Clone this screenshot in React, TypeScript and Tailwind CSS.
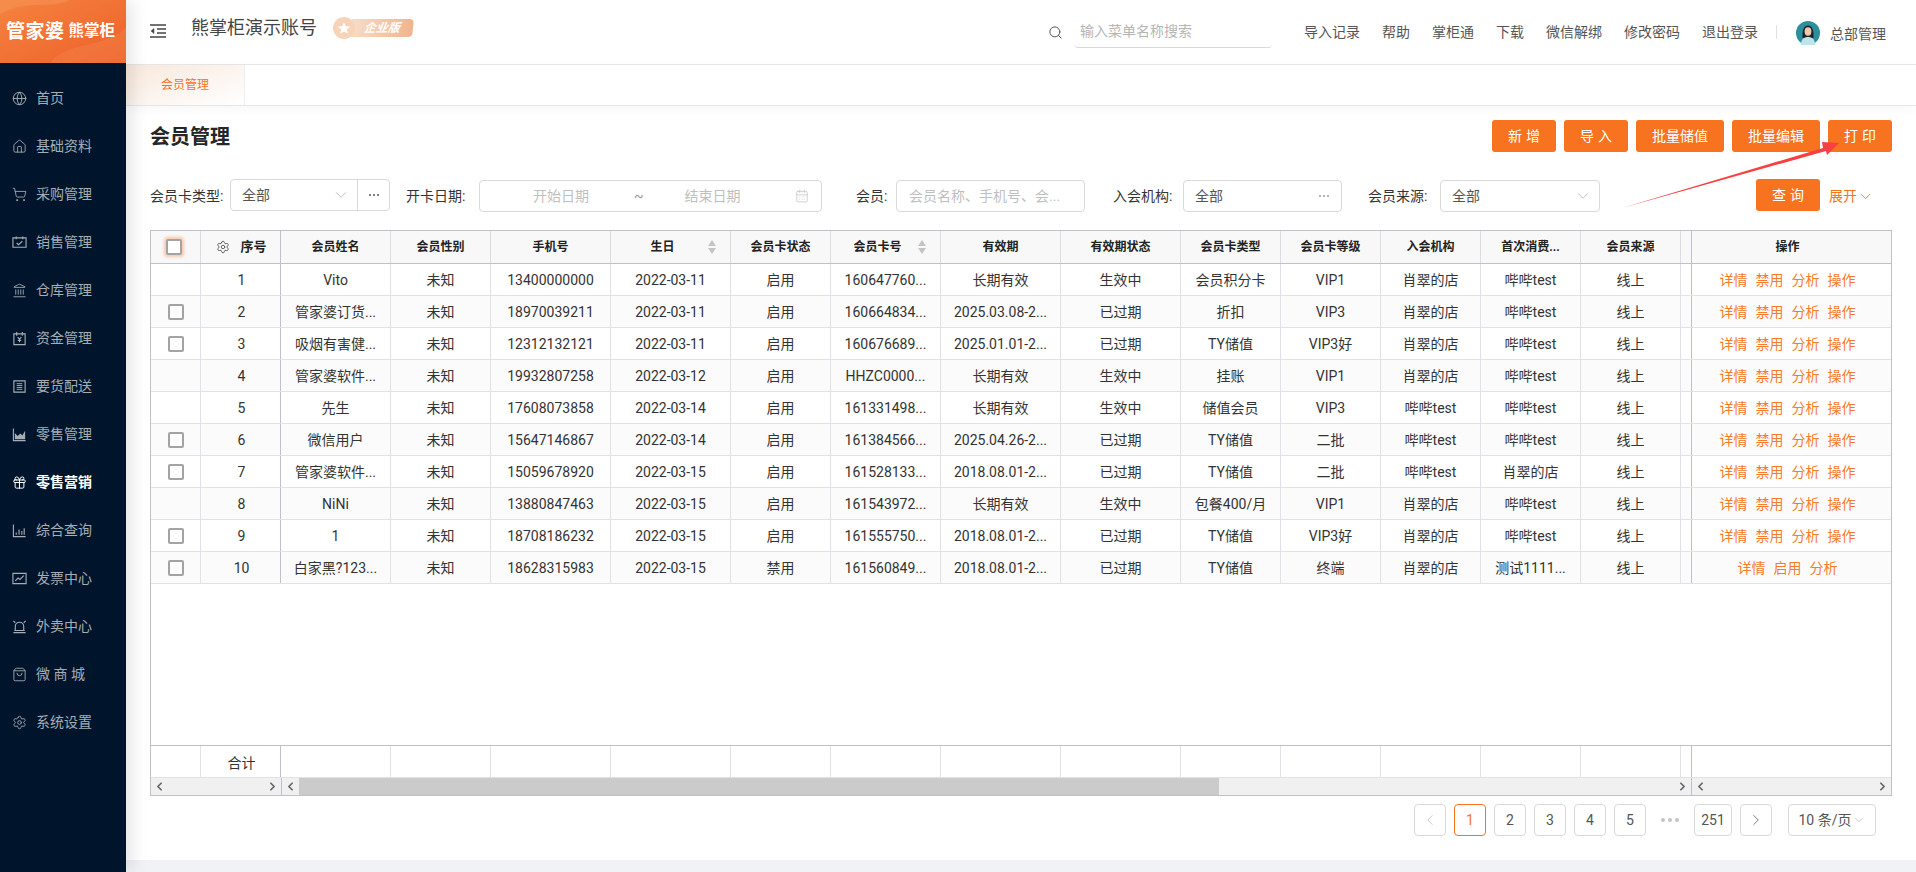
import {
  CalendarDays,
  ChevronDown,
  ChevronLeft,
  ChevronRight,
  Gift,
  Globe,
  House,
  Landmark,
  Search,
  Settings,
  ShoppingBag,
  ShoppingCart,
} from "lucide-react";
import type { ReactNode } from "react";

const font = "font-['Roboto','Noto_Sans_CJK_SC',sans-serif]";

function SalesIcon() {
  return (
    <svg width="15" height="15" viewBox="0 0 16 16" fill="none" stroke="currentColor" strokeWidth="1.2">
      <path d="M1 3h14v10H1zM4.5 1.5v3M11.5 1.5v3M5 8.5l2 1.8 4-3.6" />
    </svg>
  );
}

function FundIcon() {
  return (
    <svg width="15" height="15" viewBox="0 0 16 16" fill="none" stroke="currentColor" strokeWidth="1.2">
      <path d="M2 3h12v11.5H2zM5 1v4M11 1v4M6 6.5l2 2.2 2-2.2M8 8.7V12M6.2 10h3.6" />
    </svg>
  );
}

function DeliveryIcon() {
  return (
    <svg width="15" height="15" viewBox="0 0 16 16" fill="none" stroke="currentColor" strokeWidth="1.2">
      <path d="M2 2h12v12H2z" />
      <path d="M5 5h6M5 7h6M5 9h6M5 11h6" strokeWidth="1" />
    </svg>
  );
}

function AreaIcon() {
  return (
    <svg width="15" height="15" viewBox="0 0 16 16" fill="none">
      <path d="M1.5 1.500v13h13" stroke="currentColor" strokeWidth="1.2" />
      <path d="M3 13V6.500l3 3 3-2.500 2 2 3-5V13z" fill="currentColor" />
    </svg>
  );
}

function QueryIcon() {
  return (
    <svg width="15" height="15" viewBox="0 0 16 16" fill="none" stroke="currentColor" strokeWidth="1.2">
      <path d="M1.500 1.500v13h13M4.500 12.500V10M7.500 12.500V7M10.500 12.500V8.500M13 12.500V5.500" />
    </svg>
  );
}

function InvoiceIcon() {
  return (
    <svg width="15" height="15" viewBox="0 0 16 16" fill="none" stroke="currentColor" strokeWidth="1.2">
      <path d="M1 2.500h14v11H1zM3.500 10.500l3-3 2 1.500 4-4" />
    </svg>
  );
}

function AlarmIcon() {
  return (
    <svg width="15" height="15" viewBox="0 0 16 16" fill="none" stroke="currentColor" strokeWidth="1.2">
      <path d="M3.500 12V8a4.500 4.500 0 0 1 9 0v4M1.500 14.500h13M2.500 12.200h11M1.500 2l2 2M14.500 2l-2 2" />
    </svg>
  );
}

const menu: { label: string; icon: ReactNode; active?: boolean }[] = [
  { label: "首页", icon: <Globe size={15} strokeWidth={1.5} /> },
  { label: "基础资料", icon: <House size={15} strokeWidth={1.4} /> },
  { label: "采购管理", icon: <ShoppingCart size={15} strokeWidth={1.4} /> },
  { label: "销售管理", icon: <SalesIcon /> },
  { label: "仓库管理", icon: <Landmark size={15} strokeWidth={1.4} /> },
  { label: "资金管理", icon: <FundIcon /> },
  { label: "要货配送", icon: <DeliveryIcon /> },
  { label: "零售管理", icon: <AreaIcon /> },
  { label: "零售营销", icon: <Gift size={15} strokeWidth={1.6} />, active: true },
  { label: "综合查询", icon: <QueryIcon /> },
  { label: "发票中心", icon: <InvoiceIcon /> },
  { label: "外卖中心", icon: <AlarmIcon /> },
  { label: "微 商 城", icon: <ShoppingBag size={15} strokeWidth={1.4} /> },
  { label: "系统设置", icon: <Settings size={15} strokeWidth={1.4} /> },
];

const topLinks = [
  { label: "导入记录", cls: "ml-0" },
  { label: "帮助", cls: "ml-[22px]" },
  { label: "掌柜通", cls: "ml-[22px]" },
  { label: "下载", cls: "ml-[22px]" },
  { label: "微信解绑", cls: "ml-[22px]" },
  { label: "修改密码", cls: "ml-[22px]" },
  { label: "退出登录", cls: "ml-[22px]" },
];

const columns = [
  { label: "", cls: "w-[50px]" },
  { label: "序号", cls: "w-[80px] pl-[2px] border-r-[#bfc0cc]" },
  { label: "会员姓名", cls: "w-[110px]" },
  { label: "会员性别", cls: "w-[100px]" },
  { label: "手机号", cls: "w-[120px]" },
  { label: "生日", cls: "w-[120px]", sort: true },
  { label: "会员卡状态", cls: "w-[100px]" },
  { label: "会员卡号", cls: "w-[110px]", sort: true },
  { label: "有效期", cls: "w-[120px]" },
  { label: "有效期状态", cls: "w-[120px]" },
  { label: "会员卡类型", cls: "w-[100px]" },
  { label: "会员卡等级", cls: "w-[100px]" },
  { label: "入会机构", cls: "w-[100px]" },
  { label: "首次消费...", cls: "w-[100px]" },
  { label: "会员来源", cls: "w-[100px]" },
  { label: "", cls: "w-[11px] border-r-[#bfc0cc]" },
  { label: "操作", cls: "w-[199px] pr-[8px] border-r-0" },
];

const rows = [
  { check: false, cells: ["1", "Vito", "未知", "13400000000", "2022-03-11", "启用", "160647760...", "长期有效", "生效中", "会员积分卡", "VIP1", "肖翠的店", "哔哔test", "线上"] },
  { check: true, cells: ["2", "管家婆订货...", "未知", "18970039211", "2022-03-11", "启用", "160664834...", "2025.03.08-2...", "已过期", "折扣", "VIP3", "肖翠的店", "哔哔test", "线上"] },
  { check: true, cells: ["3", "吸烟有害健...", "未知", "12312132121", "2022-03-11", "启用", "160676689...", "2025.01.01-2...", "已过期", "TY储值", "VIP3好", "肖翠的店", "哔哔test", "线上"] },
  { check: false, cells: ["4", "管家婆软件...", "未知", "19932807258", "2022-03-12", "启用", "HHZC0000...", "长期有效", "生效中", "挂账", "VIP1", "肖翠的店", "哔哔test", "线上"] },
  { check: false, cells: ["5", "先生", "未知", "17608073858", "2022-03-14", "启用", "161331498...", "长期有效", "生效中", "储值会员", "VIP3", "哔哔test", "哔哔test", "线上"] },
  { check: true, cells: ["6", "微信用户", "未知", "15647146867", "2022-03-14", "启用", "161384566...", "2025.04.26-2...", "已过期", "TY储值", "二批", "哔哔test", "哔哔test", "线上"] },
  { check: true, cells: ["7", "管家婆软件...", "未知", "15059678920", "2022-03-15", "启用", "161528133...", "2018.08.01-2...", "已过期", "TY储值", "二批", "哔哔test", "肖翠的店", "线上"] },
  { check: false, cells: ["8", "NiNi", "未知", "13880847463", "2022-03-15", "启用", "161543972...", "长期有效", "生效中", "包餐400/月", "VIP1", "肖翠的店", "哔哔test", "线上"] },
  { check: true, cells: ["9", "1", "未知", "18708186232", "2022-03-15", "启用", "161555750...", "2018.08.01-2...", "已过期", "TY储值", "VIP3好", "肖翠的店", "哔哔test", "线上"] },
  { check: true, disabled: true, cells: ["10", "白家黑?123...", "未知", "18628315983", "2022-03-15", "禁用", "161560849...", "2018.08.01-2...", "已过期", "TY储值", "终端", "肖翠的店", "测试1111...", "线上"] },
];

function Checkbox({ glow }: { glow?: boolean }) {
  return (
    <span
      className={`block h-4 w-4 rounded-[2px] border-2 border-[#a3a3a3] bg-white ${glow ? "shadow-[0_0_3px_2px_rgba(248,114,32,0.35)]" : ""}`}
    />
  );
}

function SortIcon() {
  return (
    <span className="absolute right-[14px] top-1/2 flex -translate-y-1/2 flex-col gap-[2px]">
      <span className="h-0 w-0 border-x-[4px] border-b-[6px] border-x-transparent border-b-[#c4c4c4]" />
      <span className="h-0 w-0 border-x-[4px] border-t-[6px] border-x-transparent border-t-[#c4c4c4]" />
    </span>
  );
}

function OrangeButton({ children, cls }: { children: ReactNode; cls: string }) {
  return (
    <button className={`h-8 rounded-[3px] bg-[#f7731f] text-[14px] text-white ${cls}`}>
      {children}
    </button>
  );
}

function Label({ children, cls }: { children: ReactNode; cls: string }) {
  return <span className={`text-[14px] text-[#333] ${cls}`}>{children}</span>;
}

function ScrollArrow({ right }: { right?: boolean }) {
  const Icon = right ? ChevronRight : ChevronLeft;
  return (
    <span className="flex h-full w-[17px] shrink-0 items-center justify-center text-[#666]">
      <Icon size={13} strokeWidth={3.2} />
    </span>
  );
}

function PageButton({ children, active, cls }: { children: ReactNode; active?: boolean; cls?: string }) {
  return (
    <span
      className={`flex h-8 items-center justify-center rounded-[4px] border text-[14px] ${
        active ? "border-[#f7731f] text-[#f7731f]" : "border-[#d9d9d9] text-[#555]"
      } ${cls ?? "w-8"}`}
    >
      {children}
    </span>
  );
}

function Sidebar() {
  return (
    <aside className="relative z-20 flex w-[126px] shrink-0 flex-col bg-[#00152b] shadow-[6px_0_16px_rgba(0,0,0,0.1)]">
      <div className="relative flex h-[63px] items-center overflow-hidden bg-gradient-to-br from-[#f5833f] to-[#ee5f2a] pl-[6px]">
        <svg className="absolute inset-0" width="126" height="63" viewBox="0 0 126 63" fill="none">
          <path d="M0 14C30 -2 50 10 70 0H0z" fill="#f8a065" fillOpacity="0.35" />
          <path d="M50 63C70 40 100 50 126 28V63z" fill="#f8a065" fillOpacity="0.22" />
        </svg>
        <span className="relative text-[19px] font-bold leading-none tracking-[0.5px] text-white">管家婆</span>
        <span className="relative ml-[4px] text-[15.5px] font-bold leading-none text-white">熊掌柜</span>
      </div>
      <nav className="pt-[11px]">
        {menu.map((item) => (
          <div
            key={item.label}
            className={`flex h-12 items-center pl-[12px] text-[14px] ${
              item.active ? "font-bold text-white" : "text-[#a6adb4]"
            }`}
          >
            <span className="flex w-[15px] shrink-0 justify-center">{item.icon}</span>
            <span className="ml-[9px]">{item.label}</span>
          </div>
        ))}
      </nav>
    </aside>
  );
}

function TopBar() {
  return (
    <header className="flex h-[65px] items-center border-b border-[#e6e6e6] bg-white pl-6 pr-[30px]">
      <svg className="mb-[2px]" width="16" height="14" viewBox="0 0 16 14" fill="none" stroke="#444" strokeWidth="1.4">
        <path d="M0 1h16M7 5h9M7 9h9M0 13h16" />
        <path d="M4 4.500L1 7l3 2.500z" fill="#444" strokeWidth="0.5" />
      </svg>
      <span className="mb-[9px] ml-[25px] text-[18px] text-[#444]">熊掌柜演示账号</span>
      <span className="mb-[8px] ml-4 flex items-center">
        <span className="z-10 flex h-[22px] w-[22px] items-center justify-center rounded-full bg-[#f7d3ba]">
          <svg width="14" height="14" viewBox="0 0 24 24" fill="#fff">
            <path d="M12 2l3 7 7.500.6-5.700 4.900 1.800 7.500L12 18l-6.600 4 1.800-7.500L1.500 9.600 9 9z" />
          </svg>
        </span>
        <span className="-ml-1 flex h-[18px] w-[62px] -skew-x-6 items-center rounded-r-[4px] bg-gradient-to-r from-[#f8dcc8] to-[#f0b48c] pl-[13px] text-[12px] font-bold italic text-white">
          企业版
        </span>
      </span>
      <div className="ml-auto flex items-center">
        <Search size={15} className="text-[#555]" strokeWidth={1.6} />
        <span className="ml-[11px] flex h-8 w-[198px] items-center rounded-b-[4px] border-b border-[#d9d9d9] pl-[6px] text-[14px] text-[#b5b5b5]">
          输入菜单名称搜索
        </span>
        <div className="ml-8 flex items-center">
          {topLinks.map((link) => (
            <span key={link.label} className={`text-[14px] text-[#555] ${link.cls}`}>
              {link.label}
            </span>
          ))}
        </div>
        <span className="ml-[18px] h-[14px] w-px bg-[#e0e0e0]" />
        <svg className="ml-[19px] mt-px" width="24" height="24" viewBox="0 0 24 24">
          <circle cx="12" cy="12" r="12" fill="#2c8f9c" />
          <path d="M6.500 17C6 9 8 4.500 12 4.500S18 9 17.500 17z" fill="#1d2430" />
          <ellipse cx="12" cy="10.500" rx="3.400" ry="4.200" fill="#f3c7a8" />
          <path d="M5 24c0-6 3-8 7-8s7 2 7 8z" fill="#bfe4ea" />
        </svg>
        <span className="ml-[10px] pt-1 text-[14px] text-[#555]">总部管理</span>
      </div>
    </header>
  );
}

function Filters() {
  return (
    <div className="relative mt-[27px] flex h-[34px] items-center text-[14px] text-[#555]">
      <Label cls="w-[80px]">会员卡类型:</Label>
      <div className="flex h-8 w-[160px] -translate-y-px items-center rounded-[4px] border border-[#d9d9d9]">
        <span className="ml-[11px] text-[14px]">全部</span>
        <ChevronDown size={18} strokeWidth={1} className="ml-auto mr-[7px] text-[#aaa]" />
        <span className="flex h-full w-[32px] items-center justify-center gap-[2px] border-l border-[#d9d9d9]">
          <span className="h-[2px] w-[2px] rounded-full bg-[#555]" />
          <span className="h-[2px] w-[2px] rounded-full bg-[#555]" />
          <span className="h-[2px] w-[2px] rounded-full bg-[#555]" />
        </span>
      </div>
      <Label cls="ml-[16px] w-[73px]">开卡日期:</Label>
      <div className="flex h-8 w-[343px] items-center rounded-[4px] border border-[#d9d9d9] text-[#bfbfbf]">
        <span className="ml-[53px]">开始日期</span>
        <span className="ml-[45px] text-[#999]">~</span>
        <span className="ml-[41px]">结束日期</span>
        <CalendarDays size={14} strokeWidth={1.2} className="ml-auto mr-[12px] text-[#c0c0c0]" />
      </div>
      <Label cls="ml-[34px] w-[40px]">会员:</Label>
      <div className="flex h-8 w-[189px] items-center rounded-[4px] border border-[#d9d9d9] pl-3 text-[#bfbfbf]">
        会员名称、手机号、会...
      </div>
      <Label cls="ml-[28px] w-[70px]">入会机构:</Label>
      <div className="flex h-8 w-[159px] items-center rounded-[4px] border border-[#d9d9d9] pl-[11px]">
        全部
        <span className="ml-auto mr-[12px] flex gap-[2px]">
          <span className="h-[2px] w-[2px] rounded-full bg-[#999]" />
          <span className="h-[2px] w-[2px] rounded-full bg-[#999]" />
          <span className="h-[2px] w-[2px] rounded-full bg-[#999]" />
        </span>
      </div>
      <Label cls="ml-[26px] w-[72px]">会员来源:</Label>
      <div className="flex h-8 w-[160px] items-center rounded-[4px] border border-[#d9d9d9] pl-[11px]">
        全部
        <ChevronDown size={18} strokeWidth={1} className="ml-auto mr-[7px] text-[#aaa]" />
      </div>
      <OrangeButton cls="ml-auto w-16 -translate-y-px pl-1 tracking-[4px]">查询</OrangeButton>
      <span className="ml-[9px] flex w-[63px] items-center text-[14px] text-[#f7731f]">
        展开
        <ChevronDown size={17} strokeWidth={1.3} />
      </span>
    </div>
  );
}

function MemberTable() {
  return (
    <div className={`mt-[17px] w-[1742px] border border-[#bfc0cc] text-[14px] text-[#333]`}>
      <div className="flex h-[33px] border-b border-[#bfc0cc] bg-[#f8f8f8] text-[12px] font-bold text-[#222]">
        {columns.map((col, i) => (
          <div
            key={i}
            className={`relative flex shrink-0 items-center justify-center border-r border-[#dcdde4] ${col.cls} ${col.sort ? "pr-[16px]" : ""}`}
          >
            {i === 0 && (
              <span className="-ml-[3px]">
                <Checkbox glow />
              </span>
            )}
            {i === 1 && <Settings size={14} strokeWidth={1.5} className="mr-[10px] text-[#555]" />}
            {i === 1 ? <span className="text-[13px]">{col.label}</span> : col.label}
            {col.sort && <SortIcon />}
          </div>
        ))}
      </div>
      {rows.map((row, r) => (
        <div key={r} className={`flex h-8 border-b border-[#e1e2e9] ${r % 2 === 1 ? "bg-[#fbfbfc]" : "bg-white"}`}>
          <div className={`flex shrink-0 items-center justify-center border-r border-[#e1e2e9] ${columns[0].cls}`}>
            {row.check && <Checkbox />}
          </div>
          {row.cells.map((cell, c) => (
            <div
              key={c}
              className={`flex shrink-0 items-center justify-center whitespace-nowrap border-r border-[#e1e2e9] pt-[2px] ${columns[c + 1].cls}`}
            >
              {cell}
            </div>
          ))}
          <div className={`shrink-0 border-r border-[#e1e2e9] ${columns[15].cls}`} />
          <div className={`flex shrink-0 items-center justify-center gap-2 pt-[2px] text-[#f87a2d] ${columns[16].cls}`}>
            <span>详情</span>
            <span>{row.disabled ? "启用" : "禁用"}</span>
            <span>分析</span>
            {!row.disabled && <span>操作</span>}
          </div>
        </div>
      ))}
      <div className="h-[162px] border-b border-[#bfc0cc]" />
      <div className="flex h-8 border-b border-[#e1e2e9]">
        {columns.map((col, i) => (
          <div key={i} className={`flex shrink-0 items-center justify-center border-r border-[#e1e2e9] pt-[3px] ${col.cls}`}>
            {i === 1 ? "合计" : ""}
          </div>
        ))}
      </div>
      <div className="flex h-[17px] bg-[#f0f0f0]">
        <div className="flex w-[130px] shrink-0 justify-between">
          <ScrollArrow />
          <ScrollArrow right />
        </div>
        <div className="flex w-[1411px] shrink-0 border-x border-[#bfc0cc]">
          <ScrollArrow />
          <div className="flex-1">
            <div className="h-full w-[920px] bg-[#cbcbcb]" />
          </div>
          <ScrollArrow right />
        </div>
        <div className="flex flex-1 justify-between">
          <ScrollArrow />
          <ScrollArrow right />
        </div>
      </div>
    </div>
  );
}

function Pagination() {
  return (
    <div className="mt-2 flex items-center justify-end gap-2 pr-4">
      <PageButton>
        <ChevronLeft size={18} strokeWidth={1} className="text-[#bbb]" />
      </PageButton>
      <PageButton active>1</PageButton>
      <PageButton>2</PageButton>
      <PageButton>3</PageButton>
      <PageButton>4</PageButton>
      <PageButton>5</PageButton>
      <span className="flex w-8 items-center justify-center gap-[3px]">
        <span className="h-[4px] w-[4px] rounded-full bg-[#c4c4c4]" />
        <span className="h-[4px] w-[4px] rounded-full bg-[#c4c4c4]" />
        <span className="h-[4px] w-[4px] rounded-full bg-[#c4c4c4]" />
      </span>
      <PageButton cls="w-[38px]">251</PageButton>
      <PageButton>
        <ChevronRight size={18} strokeWidth={1} className="text-[#555]" />
      </PageButton>
      <PageButton cls="ml-2 w-[88px]">
        10 条/页
        <ChevronDown size={14} strokeWidth={1} className="text-[#aaa]" />
      </PageButton>
    </div>
  );
}

export default function App() {
  return (
    <div className={`relative flex h-[872px] w-[1916px] overflow-hidden bg-[#f0f2f5] ${font}`}>
      <Sidebar />
      <main className="flex min-w-0 flex-1 flex-col">
        <TopBar />
        <div className="z-10 flex h-[41px] shrink-0 border-b border-[#e6e6e6] bg-white shadow-[0_4px_10px_rgba(0,0,0,0.03)]">
          <div className="flex w-[119px] items-center justify-center border-r border-[#eee] bg-gradient-to-br from-[#f8e8dc] to-white text-[12px] text-[#f7731f]">
            会员管理
          </div>
        </div>
        <section className="h-[754px] bg-white px-6 pt-[14px]">
          <div className="flex h-8 items-center">
            <h1 className="pt-[2px] text-[20px] font-bold text-[#262626]">会员管理</h1>
            <div className="ml-auto flex gap-2">
              <OrangeButton cls="w-16 pl-1 tracking-[4px]">新增</OrangeButton>
              <OrangeButton cls="w-16 pl-1 tracking-[4px]">导入</OrangeButton>
              <OrangeButton cls="w-[88px]">批量储值</OrangeButton>
              <OrangeButton cls="w-[88px]">批量编辑</OrangeButton>
              <OrangeButton cls="w-16 pl-1 tracking-[4px]">打印</OrangeButton>
            </div>
          </div>
          <Filters />
          <MemberTable />
          <Pagination />
        </section>
      </main>
      <svg className="pointer-events-none absolute left-[1620px] top-[138px] z-30" width="224" height="74" viewBox="0 0 224 74">
        <path d="M2 70L203 10l-1-6 17 1-12 12-1-4z" fill="#f84040" />
      </svg>
    </div>
  );
}
